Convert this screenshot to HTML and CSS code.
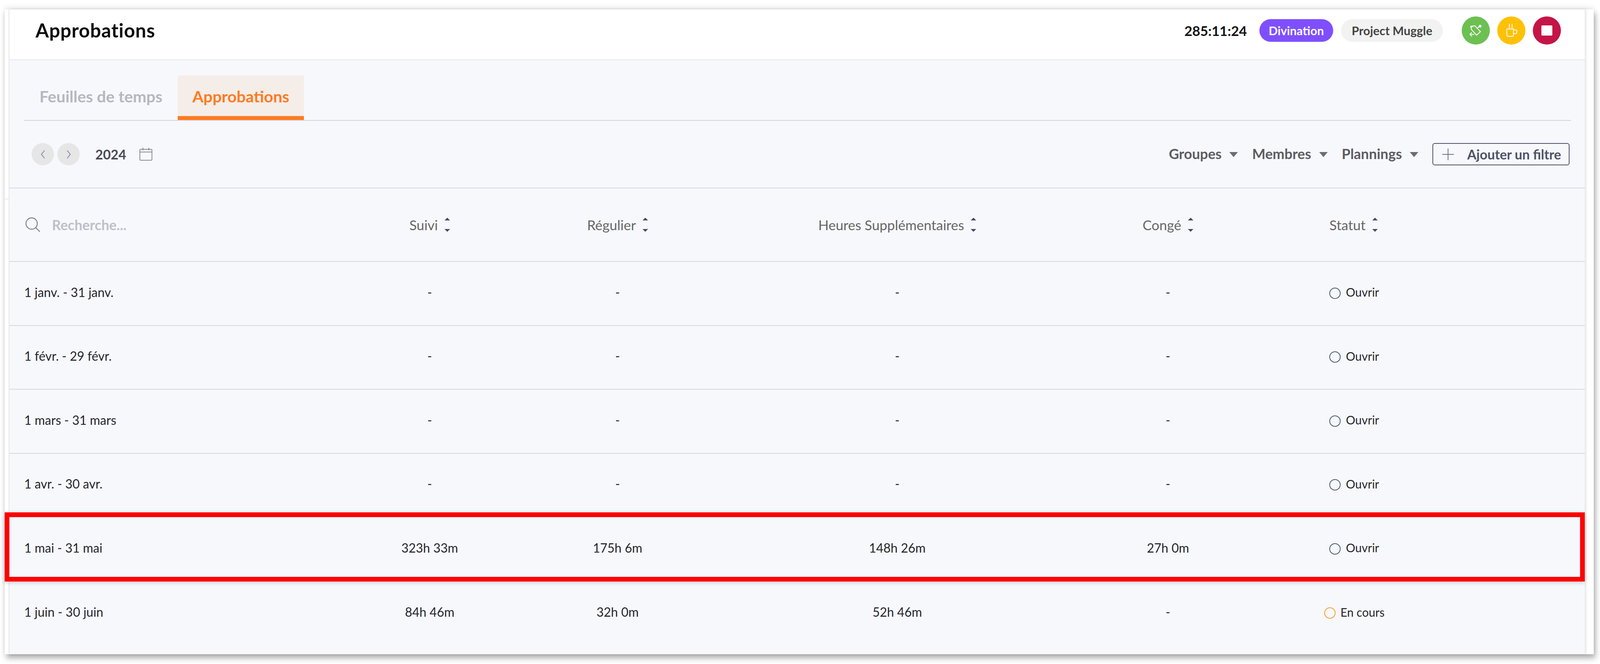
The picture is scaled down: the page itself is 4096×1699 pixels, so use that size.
FILE: index.html
```html
<!DOCTYPE html>
<html lang="fr">
<head>
<meta charset="utf-8">
<title>Approbations</title>
<link rel="stylesheet" href="styles.css">
</head>
<body>
<div class="window">
  <div class="strip-left"><span class="strip-mark"></span></div>
  <main class="main">
    <header class="topbar">
      <h1 class="title">Approbations</h1>
      <div class="top-right">
        <span class="clock">285:11:24</span>
        <span class="pill pill-purple">Divination</span>
        <span class="pill pill-grey">Project Muggle</span>
        <div class="actions">
          <span class="round round-green">
            <svg class="ic-pencil" viewBox="0 0 33 31" fill="none" stroke="#fff" stroke-width="2" stroke-linecap="round" stroke-linejoin="round">
              <path d="M3 4 L13.5 3 L28 18 L18 27 L4.5 12 Z"/>
              <path d="M4 8 L9 4"/>
              <circle cx="27" cy="4" r="3.6" fill="#fff" stroke="none"/>
              <path d="M20 9 L26 4"/>
              <path d="M1 25 H11 M1 25 L5 20.5 M1 25 L5.5 29.5"/>
            </svg>
          </span>
          <span class="round round-yellow">
            <svg class="ic-cup" viewBox="0 0 31 34" fill="none" stroke="#fff" stroke-width="2" stroke-linejoin="round" stroke-linecap="round">
              <path d="M10 1 V10 M17 1 V10"/>
              <path d="M3.4 13 H20.5 V28 Q20.5 32 16.5 32 H7.4 Q3.4 32 3.4 28 Z"/>
              <path d="M21 15.5 H26 Q29 15.5 29 18.5 V22 Q29 25 26 25 H21"/>
            </svg>
          </span>
          <span class="round round-red"><span class="stop"></span></span>
        </div>
      </div>
    </header>

    <nav class="tabs">
      <a class="tab">Feuilles de temps</a>
      <a class="tab tab-active">Approbations</a>
    </nav>

    <section class="toolbar">
      <div class="period">
        <span class="nav-btn"><svg class="chev" viewBox="0 0 12 22" fill="none" stroke="#6f7f99" stroke-width="1.8"><path d="M10 1 L2 11 L10 21"/></svg></span>
        <span class="nav-btn"><svg class="chev" viewBox="0 0 12 22" fill="none" stroke="#6f7f99" stroke-width="1.8"><path d="M2 1 L10 11 L2 21"/></svg></span>
        <span class="year">2024</span>
        <svg class="calendar" viewBox="0 0 33 33" fill="none" stroke="#8b8b92" stroke-width="2"><rect x="1" y="4" width="31" height="28" rx="2"/><path d="M1 11 H32 M9 0 V7 M24 0 V7"/></svg>
      </div>
      <div class="filters">
        <span class="filter">Groupes<i class="caret"></i></span>
        <span class="filter">Membres<i class="caret"></i></span>
        <span class="filter">Plannings<i class="caret"></i></span>
        <span class="add-filter"><svg class="plus" viewBox="0 0 30 30" stroke="#6e7488" stroke-width="2"><path d="M15 0 V30 M0 15 H30"/></svg>Ajouter un filtre</span>
      </div>
    </section>

    <section class="table">
      <div class="row row-head">
        <div class="cell-first search">
          <svg class="ic-search" viewBox="0 0 38 38" fill="none" stroke="#7d8088" stroke-width="2.4"><circle cx="16" cy="16" r="14.5"/><path d="M26.5 26.5 L37 37"/></svg>
          <span class="search-text">Recherche...</span>
        </div>
        <div class="cell"><span class="th">Suivi<svg class="sort" viewBox="0 0 14 36" fill="#3f4866"><path d="M7 0 L14 7 H0 Z M7 36 L14 29 H0 Z"/></svg></span></div>
        <div class="cell"><span class="th">Régulier<svg class="sort" viewBox="0 0 14 36" fill="#3f4866"><path d="M7 0 L14 7 H0 Z M7 36 L14 29 H0 Z"/></svg></span></div>
        <div class="cell"><span class="th">Heures Supplémentaires<svg class="sort" viewBox="0 0 14 36" fill="#3f4866"><path d="M7 0 L14 7 H0 Z M7 36 L14 29 H0 Z"/></svg></span></div>
        <div class="cell"><span class="th">Congé<svg class="sort" viewBox="0 0 14 36" fill="#3f4866"><path d="M7 0 L14 7 H0 Z M7 36 L14 29 H0 Z"/></svg></span></div>
        <div class="cell"><span class="th">Statut<svg class="sort" viewBox="0 0 14 36" fill="#3f4866"><path d="M7 0 L14 7 H0 Z M7 36 L14 29 H0 Z"/></svg></span></div>
      </div>

      <div class="row">
        <div class="cell-first">1 janv. - 31 janv.</div>
        <div class="cell">-</div><div class="cell">-</div><div class="cell">-</div><div class="cell">-</div>
        <div class="cell"><span class="status"><i class="dot"></i>Ouvrir</span></div>
      </div>
      <div class="row">
        <div class="cell-first">1 févr. - 29 févr.</div>
        <div class="cell">-</div><div class="cell">-</div><div class="cell">-</div><div class="cell">-</div>
        <div class="cell"><span class="status"><i class="dot"></i>Ouvrir</span></div>
      </div>
      <div class="row">
        <div class="cell-first">1 mars - 31 mars</div>
        <div class="cell">-</div><div class="cell">-</div><div class="cell">-</div><div class="cell">-</div>
        <div class="cell"><span class="status"><i class="dot"></i>Ouvrir</span></div>
      </div>
      <div class="row">
        <div class="cell-first">1 avr. - 30 avr.</div>
        <div class="cell">-</div><div class="cell">-</div><div class="cell">-</div><div class="cell">-</div>
        <div class="cell"><span class="status"><i class="dot"></i>Ouvrir</span></div>
      </div>
      <div class="row row-marked">
        <div class="cell-first">1 mai - 31 mai</div>
        <div class="cell">323h 33m</div><div class="cell">175h 6m</div><div class="cell">148h 26m</div><div class="cell">27h 0m</div>
        <div class="cell"><span class="status"><i class="dot"></i>Ouvrir</span></div>
        <div class="highlight"></div>
      </div>
      <div class="row row-last">
        <div class="cell-first">1 juin - 30 juin</div>
        <div class="cell">84h 46m</div><div class="cell">32h 0m</div><div class="cell">52h 46m</div><div class="cell">-</div>
        <div class="cell"><span class="status"><i class="dot dot-orange"></i>En cours</span></div>
      </div>
    </section>
  </main>
</div>
</body>
</html>
```

FILE: styles.css
```css
* { box-sizing: border-box; }
html, body { margin: 0; padding: 0; background: #fff; }
body {
  width: 4096px;
  height: 1699px;
  overflow: hidden;
  padding: 24px 16px 25px 12px;
  font-family: "Lato", "Noto Sans", sans-serif;
  color: #222;
}
.window {
  display: flex;
  height: 100%;
  background: #fff;
  box-shadow: 4px 10px 14px rgba(0, 0, 0, .32), 0 -6px 12px rgba(0, 0, 0, .08);
  padding-right: 23px;
}
.strip-left {
  flex: none;
  width: 12px;
  border-right: 2px solid #e6e7e9;
  position: relative;
}
.strip-mark {
  position: absolute;
  left: 0; right: 0; top: 485px;
  height: 1px;
  background: #d6d8de;
}
.main {
  flex: 1;
  min-width: 0;
  display: flex;
  flex-direction: column;
  background: #f7f8fc;
  box-shadow: 3px 0 6px rgba(0, 0, 0, .12);
}

/* top bar */
.topbar {
  flex: none;
  height: 130px;
  padding: 0 61px 20px 67px;
  background: #fff;
  border-bottom: 2px solid #e6e7e9;
  display: flex;
  align-items: center;
  justify-content: space-between;
}
.title { margin: 0 0 2px; font-size: 49px; letter-spacing: .9px; font-weight: 700; color: #0b0b0b; }
.top-right { display: flex; align-items: center; }
.clock { font-size: 35px; font-weight: 700; color: #111; margin-right: 32px; }
.pill {
  height: 58px;
  border-radius: 29px;
  display: flex;
  align-items: center;
  font-size: 30.5px;
  font-weight: 700;
}
.pill-purple { width: 189px; justify-content: center; background: #7f4fff; color: #fff; margin-right: 20px; }
.pill-grey { width: 261px; justify-content: center; background: #f2f2f2; color: #444; margin-right: 48px; }
.actions { display: flex; gap: 19px; }
.round { width: 72px; height: 72px; border-radius: 50%; display: flex; align-items: center; justify-content: center; }
.round-green { background: #6cc052; }
.round-yellow { background: #ffc107; }
.round-red { background: #c41548; }
.ic-pencil { width: 33px; height: 31px; }
.ic-cup { width: 31px; height: 34px; }
.stop { width: 28px; height: 26px; border-radius: 2px; background: #fff; }

/* tabs */
.tabs {
  flex: none;
  margin: 39px 35px 0 38px;
  height: 116px;
  border-bottom: 2px solid #d2d4da;
  display: flex;
}
.tab {
  width: 393px;
  padding: 3px 0 0 39px;
  font-size: 41px;
  font-weight: 700;
  color: #b5b7c2;
  display: flex;
  align-items: center;
  border-bottom: 10px solid transparent;
}
.tab-active {
  width: 323px;
  padding: 3px 0 0;
  justify-content: center;
  background: #f5ede8;
  color: #ff7a21;
  border-bottom-color: #ff7a21;
}

/* toolbar */
.toolbar {
  flex: none;
  height: 173px;
  padding: 0 39px 0 57px;
  border-bottom: 2px solid #d8d9de;
  display: flex;
  align-items: center;
  justify-content: space-between;
}
.period, .filters { display: flex; align-items: center; }
.nav-btn {
  width: 57px; height: 57px;
  border-radius: 50%;
  background: #e6e6e6;
  margin-right: 9px;
  display: flex; align-items: center; justify-content: center;
}
.chev { width: 12px; height: 24px; }
.year { margin-left: 31px; font-size: 34px; font-weight: 700; color: #4a4a55; }
.calendar { width: 33px; height: 33px; margin-left: 34px; }
.filter { display: flex; align-items: center; font-size: 36px; font-weight: 700; color: #5c5c62; margin-right: 36px; line-height: 1; padding-bottom: 3px; }
.caret { width: 0; height: 0; margin: 5px 0 0 20px; border: 11px solid transparent; border-top: 13px solid #6c6c72; border-bottom: 0; }
.add-filter {
  display: flex; align-items: center;
  width: 351px; height: 57px;
  padding-left: 23px;
  border: 2px solid #4a5268;
  border-radius: 6px;
  font-size: 34px; font-weight: 700; color: #4c5266;
}
.plus { width: 30px; height: 30px; margin-right: 34px; }

/* table */
.table { flex: 1; min-height: 0; display: flex; flex-direction: column; }
.row {
  position: relative;
  flex: none;
  height: 163.5px;
  padding: 0 0 7px 38px;
  display: grid;
  grid-template-columns: 810px 456px 506px 926px 460px 490px 1fr;
  align-items: center;
  border-bottom: 2px solid #d8d9de;
  font-size: 32px;
  color: #25262b;
}
.row-head { height: 188px; padding-bottom: 0; }
.row-last { border-bottom: 0; }
.cell { display: flex; justify-content: center; align-items: center; }
.search { display: flex; align-items: center; }
.ic-search { width: 38px; height: 38px; margin: 0 30px 0 3px; }
.search-text { font-size: 35.5px; font-weight: 700; color: #bdc0c9; }
.th { display: flex; align-items: center; font-size: 35px; color: #666; }
.sort { width: 14px; height: 36px; margin-left: 17px; }
.status { display: flex; align-items: center; font-size: 30px; margin-left: 4px; }
.dot { width: 29px; height: 29px; margin-right: 13px; border: 2px solid #4e5a70; border-radius: 50%; position: relative; top: 3px; }
.dot-orange { border-color: #ff9a2e; }
.highlight {
  position: absolute;
  left: -12px; right: 0;
  top: -13px; bottom: -2.5px;
  border: 12px solid #f00;
  box-shadow: 0 3px 10px rgba(0, 0, 0, .18);
  pointer-events: none;
}
```
